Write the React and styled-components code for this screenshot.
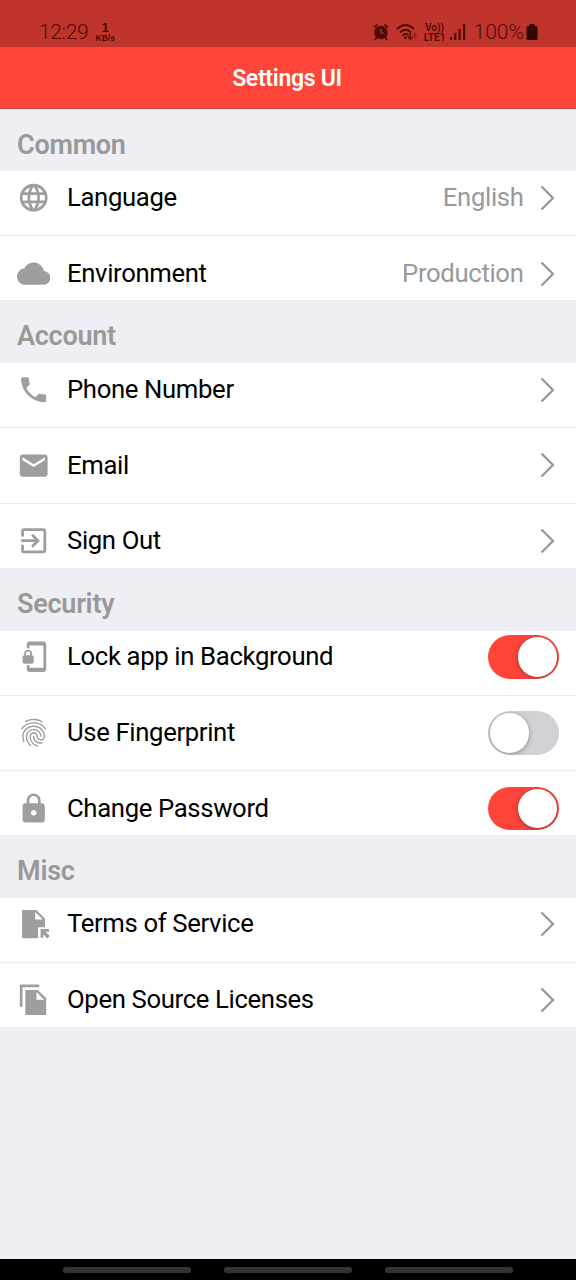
import React from "react";
import styled, { createGlobalStyle } from "styled-components";
import {
  MdLanguage,
  MdCloud,
  MdPhone,
  MdEmail,
  MdExitToApp,
  MdPhonelinkLock,
  MdFingerprint,
  MdLock,
} from "react-icons/md";

const GlobalStyle = createGlobalStyle`
  * { box-sizing: border-box; }
  body { margin: 0; font-family: Roboto, "Liberation Sans", sans-serif; }
`;

const Screen = styled.div`
  display: flex;
  flex-direction: column;
  width: 576px;
  height: 1280px;
  overflow: hidden;
  background: #efeef4;
`;

const StatusBar = styled.div`
  display: flex;
  justify-content: space-between;
  height: 47px;
  padding: 17px 38px 0 39px;
  background: #bf342b;
  color: #4e0b08;
`;

const StatusGroup = styled.div`
  display: flex;
  align-items: center;
  height: 30px;
`;

const StatusText = styled.span`
  font-size: 21px;
  font-weight: 350;
  line-height: 30px;
  letter-spacing: ${(p) => p.$tracking}px;
  margin-right: ${(p) => p.$gap || 0}px;
`;

const Speed = styled.span`
  display: flex;
  flex-direction: column;
  align-items: center;
  width: 22px;
  margin-left: 6px;
  font: 700 8.5px/9px "Liberation Sans", sans-serif;
`;

const SpeedNumber = styled.span`
  font-size: 13.5px;
  line-height: 13.5px;
`;

const Volte = styled.span`
  display: flex;
  flex-direction: column;
  align-items: center;
  width: 22px;
  margin: 1px 4px 0 6px;
  font: 600 10px/9.5px Roboto, sans-serif;
`;

const StatusIcon = styled.svg`
  display: block;
  flex: none;
  margin-right: ${(p) => p.$gap || 0}px;
`;

const Header = styled.header`
  display: flex;
  align-items: center;
  justify-content: center;
  height: 62px;
  padding: 2px 2px 0 0;
  border-bottom: 1px solid #b5443f;
  background: #ff453a;
  color: #fff;
  font-size: 23px;
  font-weight: 600;
  letter-spacing: -0.3px;
`;

const SectionTitle = styled.h2`
  display: flex;
  align-items: center;
  height: ${(p) => p.$height}px;
  margin: 0;
  padding: 9px 17px 0;
  color: #999;
  font-size: 27px;
  font-weight: 600;
  letter-spacing: -0.25px;
`;

const Row = styled.div`
  display: flex;
  align-items: center;
  height: ${(p) => (p.$first ? 65 : p.$last ? 64 : 75.5)}px;
  padding: ${(p) => (p.$first ? "0 17px 11px" : p.$last ? "11px 17px 0" : "0 17px")};
  border-bottom: ${(p) => (p.$last ? "none" : "1px solid #ececee")};
  background: #fff;
`;

const IconSlot = styled.span`
  display: flex;
  align-items: center;
  width: 34px;
  height: 34px;
  margin-right: 16px;
  color: #9e9e9e;

  svg {
    width: 33.4px;
    height: 33.4px;
  }
`;

const Label = styled.span`
  flex: 1;
  padding-bottom: 1.4px;
  color: #000;
  font-size: 25.7px;
  letter-spacing: -0.35px;
`;

const Value = styled.span`
  margin-right: 16.5px;
  padding-bottom: 1.4px;
  color: #999;
  font-size: 25.7px;
  letter-spacing: -0.35px;
`;

const ChevronIcon = styled.svg`
  display: block;
  margin-right: 4px;
`;

const Track = styled.span`
  display: flex;
  align-items: center;
  justify-content: ${(p) => (p.$on ? "flex-end" : "flex-start")};
  width: 71.5px;
  height: 43.5px;
  padding: 2px;
  border-radius: 22px;
  overflow: hidden;
  background: ${(p) => (p.$on ? "#ff453a" : "#d1d1d6")};
`;

const Knob = styled.span`
  width: 39.5px;
  height: 39.5px;
  border-radius: 50%;
  background: #fff;
  box-shadow: 0 1px 5px rgba(0, 0, 0, 0.35);
`;

const NavBar = styled.div`
  display: flex;
  align-items: center;
  justify-content: center;
  gap: 33px;
  height: 21px;
  margin-top: auto;
  background: #000;
`;

const NavHandle = styled.span`
  width: 128px;
  height: 6px;
  border-radius: 2.5px;
  background: #333;
`;

const FileShortcut = () => (
  <svg viewBox="0 0 34 34" fill="currentColor">
    <path
      fillRule="evenodd"
      d="M5.2 3H19.5L28.5 11.8V20.5H21.5V31.8H5.2ZM18.5 5V12.8H26.3Z"
    />
    <path d="M24 22.5H32.7V25.2H29L33.4 29.6L31 32L26.7 27.7V31.3H24Z" />
  </svg>
);

const FileCopy = () => (
  <svg viewBox="0 0 24 24" fill="currentColor">
    <path d="M16 1H2v16h2V3h12V1zm-1 4H6v18h15V11l-6-6zm-1 7V6.5l5.5 5.5H14z" />
  </svg>
);

const Chevron = () => (
  <ChevronIcon width="15" height="26" viewBox="0 0 15 26" fill="none">
    <path d="M1.5 1.5L13 13L1.5 24.5" stroke="#999" strokeWidth="2.3" />
  </ChevronIcon>
);

const Alarm = () => (
  <StatusIcon $gap={7} width="16" height="18" viewBox="0 0 16 18" fill="none" stroke="currentColor">
    <circle cx="8" cy="9.5" r="6.7" fill="currentColor" stroke="none" />
    <path d="M1 4.5L4.5 1.5M15 4.5L11.5 1.5M3.8 14L2 17M12.2 14L14 17" strokeWidth="1.8" />
    <path d="M8 6V10H11" stroke="#bf342b" strokeWidth="1.2" />
  </StatusIcon>
);

const Wifi = () => (
  <StatusIcon width="22" height="18" viewBox="0 0 22 18" fill="none" stroke="currentColor">
    <path d="M1 6Q9.5 -2 18 6M4 9.5Q9.5 4 15 9.5M6.5 12.7Q9.5 9.5 12.5 12.2" strokeWidth="1.8" />
    <circle cx="9.5" cy="14.5" r="1.5" fill="currentColor" stroke="none" />
    <path d="M14.3 10V16M12 13.8L14.3 16.2L16.6 13.8" strokeWidth="1.4" />
    <path d="M19 16V10.5M17 12.7L19 10.5L21 12.7" strokeWidth="1.2" opacity=".45" />
  </StatusIcon>
);

const Signal = () => (
  <StatusIcon $gap={8} width="16" height="18" viewBox="0 0 16 18" fill="currentColor">
    <path d="M0 14h2.2v3H0zM4.2 10h2.2v7H4.2zM8.5 6h2.2v11H8.5zM13 1h2.2v16H13z" />
  </StatusIcon>
);

const Battery = () => (
  <StatusIcon width="12" height="18" viewBox="0 0 12 18" fill="#2f0805">
    <path d="M3.5 1h5v2H10q1.5 0 1.5 1.5v11Q11.5 17 10 17H2Q.5 17 .5 15.5v-11Q.5 3 2 3h1.5z" />
  </StatusIcon>
);

const Toggle = ({ on }) => (
  <Track $on={on} role="switch" aria-checked={on}>
    <Knob />
  </Track>
);

const SECTIONS = [
  {
    title: "Common",
    height: 62,
    items: [
      { icon: MdLanguage, label: "Language", value: "English" },
      { icon: MdCloud, label: "Environment", value: "Production" },
    ],
  },
  {
    title: "Account",
    height: 63,
    items: [
      { icon: MdPhone, label: "Phone Number" },
      { icon: MdEmail, label: "Email" },
      { icon: MdExitToApp, label: "Sign Out" },
    ],
  },
  {
    title: "Security",
    height: 63,
    items: [
      { icon: MdPhonelinkLock, label: "Lock app in Background", on: true },
      { icon: MdFingerprint, label: "Use Fingerprint", on: false },
      { icon: MdLock, label: "Change Password", on: true },
    ],
  },
  {
    title: "Misc",
    height: 62.5,
    items: [
      { icon: FileShortcut, label: "Terms of Service" },
      { icon: FileCopy, label: "Open Source Licenses" },
    ],
  },
];

const SettingRow = ({ item, first, last }) => {
  const Icon = item.icon;
  return (
    <Row $first={first} $last={last}>
      <IconSlot>
        <Icon />
      </IconSlot>
      <Label>{item.label}</Label>
      {item.value && <Value>{item.value}</Value>}
      {item.on === undefined ? <Chevron /> : <Toggle on={item.on} />}
    </Row>
  );
};

export default function App() {
  return (
    <Screen>
      <GlobalStyle />
      <StatusBar>
        <StatusGroup>
          <StatusText $tracking={-0.35}>12:29</StatusText>
          <Speed>
            <SpeedNumber>1</SpeedNumber>
            <span>KB/s</span>
          </Speed>
        </StatusGroup>
        <StatusGroup>
          <Alarm />
          <Wifi />
          <Volte>
            <span>Vo))</span>
            <span>LTE1</span>
          </Volte>
          <Signal />
          <StatusText $tracking={0} $gap={2}>100%</StatusText>
          <Battery />
        </StatusGroup>
      </StatusBar>
      <Header>Settings UI</Header>
      {SECTIONS.map((section) => (
        <section key={section.title}>
          <SectionTitle $height={section.height}>{section.title}</SectionTitle>
          {section.items.map((item, i) => (
            <SettingRow
              key={item.label}
              item={item}
              first={i === 0}
              last={i === section.items.length - 1}
            />
          ))}
        </section>
      ))}
      <NavBar>
        <NavHandle />
        <NavHandle />
        <NavHandle />
      </NavBar>
    </Screen>
  );
}
